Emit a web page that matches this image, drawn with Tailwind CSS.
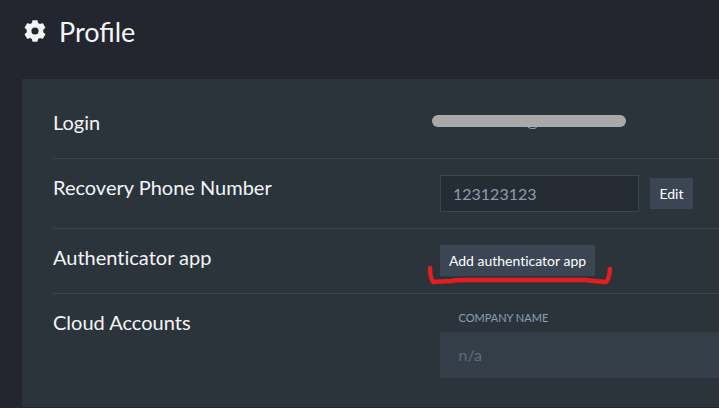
<!DOCTYPE html>
<html lang="en">
<head>
<meta charset="utf-8">
<title>Profile</title>
<script src="https://cdn.jsdelivr.net/npm/@tailwindcss/browser@4"></script>
</head>
<body class="h-[408px] overflow-hidden bg-[#23262e] font-['Lato','Liberation_Sans',sans-serif] text-[#f3f5f7]">
<header class="flex h-[79px] items-start pl-[24px] pt-[12px]">
  <svg class="mt-[8px] h-[22px] w-[22px] shrink-0" viewBox="0 0 22 22" fill="#f3f5f7" fill-rule="evenodd" aria-hidden="true">
    <path d="M9 .3Q8.4 .3 8.3 .9L7.9 3.1Q6.9 3.5 6 4.1L3.9 3.3Q3.3 3.1 3 3.6L.8 7.2Q.5 7.8 1 8.2L2.8 9.7Q2.6 11 2.8 12.3L1 13.8Q.5 14.2 .8 14.8L3 18.4Q3.3 18.9 3.9 18.7L6 17.9Q6.9 18.5 7.9 18.9L8.3 21.1Q8.4 21.7 9 21.7H13Q13.6 21.7 13.7 21.1L14.1 18.9Q15.1 18.5 16 17.9L18.1 18.7Q18.7 18.9 19 18.4L21.2 14.8Q21.5 14.2 21 13.8L19.2 12.3Q19.4 11 19.2 9.7L21 8.2Q21.5 7.8 21.2 7.2L19 3.6Q18.7 3.1 18.1 3.3L16 4.1Q15.1 3.5 14.1 3.1L13.7 .9Q13.6 .3 13 .3ZM11 7.4A3.6 3.6 0 1 1 11 14.6A3.6 3.6 0 1 1 11 7.4Z"/>
  </svg>
  <h1 class="ml-[13px] text-[27px] leading-[40px]">Profile</h1>
</header>
<main class="ml-[22px] h-[328px] bg-[#2c343b] pl-[31px] text-[20px] leading-[24px] [font-variant-ligatures:none]">
  <section class="flex h-[80px] border-b border-[#3a4553] pt-[31px]">
    <h2 class="w-[387px] shrink-0">Login</h2>
    <div class="relative w-[200px] text-[16px] text-[#8ba0b8]">
      <span class="absolute left-[85px] top-[1px] leading-[20px]">@</span>
      <span class="absolute left-[-8px] top-[5px] h-[12px] w-[194px] rounded-full bg-[#a9a9ac]"></span>
    </div>
  </section>
  <section class="flex h-[70px] border-b border-[#3a4553] pt-[16px]">
    <h2 class="w-[387px] shrink-0">Recovery Phone Number</h2>
    <input aria-label="Recovery Phone Number" value="123123123" class="h-[37px] w-[199px] border border-[#3a4553] bg-[#262c33] px-[12px] text-[16px] text-[#8b9cb1]">
    <button class="ml-[11px] mt-[3px] h-[31px] w-[43px] bg-[#3b4655] text-[14px] text-white">Edit</button>
  </section>
  <section class="flex h-[65px] border-b border-[#3a4553] pt-[16px]">
    <h2 class="w-[387px] shrink-0">Authenticator app</h2>
    <div class="relative h-[32px] w-[155px]">
      <button class="h-[31px] w-[155px] whitespace-nowrap bg-[#3b4655] text-[14px] text-white">Add authenticator app</button>
      <svg class="absolute left-[-20px] top-[-10px] h-[60px] w-[200px]" viewBox="0 0 200 60" fill="none" stroke="#e71c1c" stroke-width="4.4" stroke-linecap="round" stroke-linejoin="round" aria-hidden="true">
        <path d="M10 33Q10 42 13 47Q22 46.5 31 46Q36 45 43 45H166Q176 46.5 186 47Q189 45 190 34"/>
      </svg>
    </div>
  </section>
  <section class="flex pt-[17px]">
    <h2 class="-mt-px w-[387px] shrink-0">Cloud Accounts</h2>
    <div class="grow">
      <div class="pl-[18.5px] text-[11px] leading-[14px] text-[#8ba0b8]">COMPANY NAME</div>
      <div class="mt-[7px] h-[46px] rounded-l-[3px] bg-[#343e48] pl-[18.5px] text-[16px] leading-[46px] text-[#5d6c82]">n/a</div>
    </div>
  </section>
</main>
</body>
</html>
